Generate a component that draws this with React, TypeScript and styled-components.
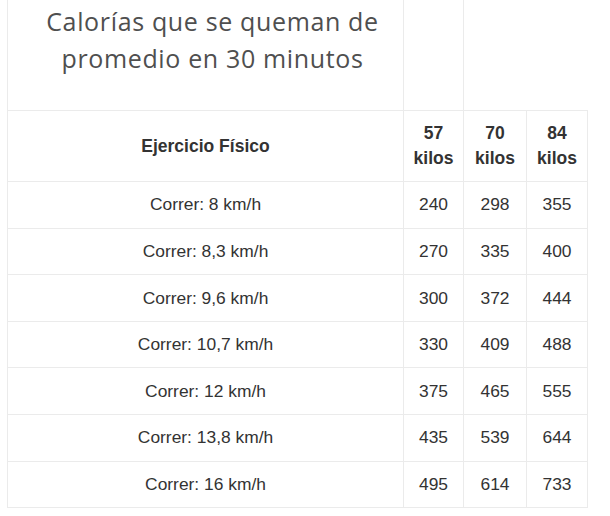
import React from 'react';
import styled, { createGlobalStyle } from 'styled-components';

const GlobalStyle = createGlobalStyle`
  html, body {
    margin: 0;
    padding: 0;
    background: #fff;
  }
`;

interface Row {
  label: string;
  values: number[];
}

const rows: Row[] = [
  { label: 'Correr: 8 km/h', values: [240, 298, 355] },
  { label: 'Correr: 8,3 km/h', values: [270, 335, 400] },
  { label: 'Correr: 9,6 km/h', values: [300, 372, 444] },
  { label: 'Correr: 10,7 km/h', values: [330, 409, 488] },
  { label: 'Correr: 12 km/h', values: [375, 465, 555] },
  { label: 'Correr: 13,8 km/h', values: [435, 539, 644] },
  { label: 'Correr: 16 km/h', values: [495, 614, 733] },
];

const weights = [57, 70, 84];
const colWidths = [396, 60, 63, 61];

export default function App() {
  return (
    <>
      <GlobalStyle />
      <Page>
        <Table>
          <colgroup>
            {colWidths.map((w, i) => (
              <col key={i} style={{ width: w }} />
            ))}
          </colgroup>
          <tbody>
            <TitleRow>
              <TitleCell>Calorías que se queman de promedio en 30 minutos</TitleCell>
              <TopCell />
            </TitleRow>
            <HeadRow>
              <HeadCell>Ejercicio Físico</HeadCell>
              {weights.map((w) => (
                <HeadCell key={w}>
                  {w}
                  <br />
                  kilos
                </HeadCell>
              ))}
            </HeadRow>
            {rows.map((r) => (
              <DataRow key={r.label}>
                <Cell>{r.label}</Cell>
                {r.values.map((v, i) => (
                  <Cell key={i}>{v}</Cell>
                ))}
              </DataRow>
            ))}
          </tbody>
        </Table>
      </Page>
    </>
  );
}

const Page = styled.div`
  width: 610px;
  height: 516px;
  overflow: hidden;
  padding-left: 7px;
  box-sizing: border-box;
`;

const Table = styled.table`
  border-collapse: collapse;
  table-layout: fixed;
  width: 580px;
  font-family: 'Liberation Sans', Arial, sans-serif;
  color: #333;
`;

const Cell = styled.td`
  border: 1px solid #ebebeb;
  text-align: center;
  vertical-align: middle;
  font-size: 17.4px;
  padding: 0 2px;
`;

const TopCell = styled(Cell)`
  border-top: none;
`;

const TitleRow = styled.tr`
  height: 110px;
`;

const TitleCell = styled(TopCell)`
  font-family: 'Open Sans', 'Noto Sans', sans-serif;
  font-size: 25px;
  line-height: 36.5px;
  color: #4f4f4f;
  letter-spacing: 0.65px;
  vertical-align: top;
  padding: 3px 0 0 14px;
`;

const HeadRow = styled.tr`
  height: 71.7px;
`;

const HeadCell = styled(Cell)`
  font-weight: bold;
  font-size: 17.5px;
  line-height: 24.5px;
`;

const DataRow = styled.tr`
  height: 46.57px;
`;
